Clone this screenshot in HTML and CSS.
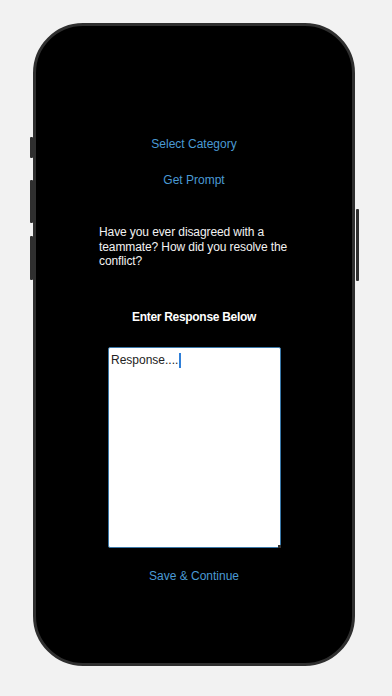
FILE: index.html
```html
<!DOCTYPE html>
<html lang="en">
<head>
    <meta charset="UTF-8">
    <meta name="viewport" content="width=device-width, initial-scale=1.0">
    <title>Interview Prompt</title>
    <link rel="stylesheet" href="styles.css">
</head>
<body>
    <div class="stage">
        <div class="phone">
            <!-- side buttons -->
            <span class="side-btn mute"></span>
            <span class="side-btn vol-up"></span>
            <span class="side-btn vol-down"></span>
            <span class="side-btn power"></span>

            <div class="screen">
                <button class="link-btn category-btn">Select Category</button>
                <button class="link-btn prompt-btn">Get Prompt</button>

                <p class="prompt-text">Have you ever disagreed with a teammate? How did you resolve the conflict?</p>

                <h2 class="response-label">Enter Response Below</h2>

                <div class="response-box">
                    <span class="response-text">Response....</span><span class="caret"></span>
                    <span class="resize-handle"></span>
                </div>

                <button class="link-btn save-btn">Save &amp; Continue</button>
            </div>
        </div>
    </div>
</body>
</html>
```

FILE: styles.css
```css
body {
    margin: 0;
    padding: 0;
    background-color: #f2f2f2;
    font-family: "Liberation Sans", Arial, sans-serif;
}

.stage {
    height: 696px;
    padding: 23px 0 0 33px;
    box-sizing: border-box;
}

.phone {
    position: relative;
    width: 322px;
    height: 643px;
    box-sizing: border-box;
    background-color: #000;
    border: 3.5px solid #2f2f2f;
    border-radius: 50px;
}

.side-btn {
    position: absolute;
    width: 3px;
    background-color: #2f2f2f;
    border-radius: 1px;
}

.mute { left: -6px; top: 111px; height: 21px; }
.vol-up { left: -6px; top: 154px; height: 43px; }
.vol-down { left: -6px; top: 210px; height: 44px; }
.power { right: -7px; top: 183px; height: 72px; }

.screen {
    display: flex;
    flex-direction: column;
    align-items: center;
    padding-top: 111px;
}

.link-btn {
    background: none;
    border: none;
    padding: 0;
    color: #4a9ad4;
    font-family: inherit;
    font-size: 12px;
    line-height: 15px;
    cursor: pointer;
}

.prompt-btn {
    margin-top: 21px;
}

.prompt-text {
    width: 192px;
    margin: 37px 0 0 2px;
    color: #f2f2f2;
    font-size: 12px;
    line-height: 14.5px;
    text-align: left;
    letter-spacing: -0.1px;
}

.response-label {
    margin: 41px 0 0 0;
    color: #fff;
    font-size: 12px;
    line-height: 15px;
    font-weight: bold;
    letter-spacing: -0.3px;
}

.response-box {
    position: relative;
    width: 173px;
    height: 201px;
    margin: 22px 0 0 1px;
    box-sizing: border-box;
    background-color: #fff;
    border: 1px solid #3a78a8;
    border-radius: 2px;
    padding: 5px 2px;
    color: #222;
    font-size: 12px;
    line-height: 15px;
}

.caret {
    display: inline-block;
    width: 1.5px;
    height: 15px;
    margin-left: 1px;
    vertical-align: top;
    background-color: #2f7fd8;
}

.resize-handle {
    position: absolute;
    right: -1px;
    bottom: -1px;
    width: 3px;
    height: 3px;
    background-color: #333;
}

.save-btn {
    margin-top: 21px;
}
```
